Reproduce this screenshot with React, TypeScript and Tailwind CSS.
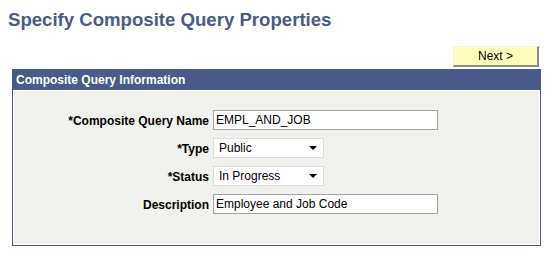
import React from "react";

function Select({ value, width }: { value: string; width: string }) {
  return (
    <div
      className={`${width} h-[20px] bg-white border border-[#dcdcdc] flex items-center justify-between pl-[5px] pr-[6px] text-[12px] text-black`}
    >
      <span>{value}</span>
      <svg width="8" height="5" viewBox="0 0 8 5">
        <polygon points="0,0 8,0 4,4" fill="#000" />
      </svg>
    </div>
  );
}

function Input({ value }: { value: string }) {
  return (
    <div className="w-[225px] h-[20px] bg-white border border-[#a5a5a5] flex items-center pl-[2px] text-[12px] text-black">
      {value}
    </div>
  );
}

function Row({ label, children }: { label: string; children: React.ReactNode }) {
  return (
    <div className="flex items-center h-[28px]">
      <div className="w-[199px] text-right font-bold text-[12px] text-black pr-[4px] pt-[2px]">
        {label}
      </div>
      {children}
    </div>
  );
}

export default function App() {
  return (
    <div
      className="w-[547px] h-[253px] bg-white relative overflow-hidden"
      style={{ fontFamily: '"Liberation Sans", Arial, sans-serif' }}
    >
      <div className="pl-[8px] pt-[7px] h-[46px]">
        <h1 className="text-[18.6px] font-bold text-[#4a5a8a] leading-[26px]">
          Specify Composite Query Properties
        </h1>
      </div>
      <div className="flex justify-end pr-[8px] h-[23px]">
        <div className="w-[86px] h-[21px] bg-[#ffffbb] border-t border-l border-[#f2f2f2] border-r-2 border-b-2 border-r-[#8a8a8a] border-b-[#8a8a8a] flex items-center justify-center text-[12px] text-black">
          Next &gt;
        </div>
      </div>
      <div className="ml-[12px] w-[529px] h-[177px] border border-[#4a5a8a] flex flex-col">
        <div className="h-[20px] bg-[#4a5a8a] flex items-center pl-[3px] text-[12px] font-bold text-white">
          Composite Query Information
        </div>
        <div className="flex-1 bg-[#f1f2ee] border border-white pt-[15px]">
          <Row label="*Composite Query Name">
            <Input value="EMPL_AND_JOB" />
          </Row>
          <Row label="*Type">
            <Select value="Public" width="w-[111px]" />
          </Row>
          <Row label="*Status">
            <Select value="In Progress" width="w-[111px]" />
          </Row>
          <Row label="Description">
            <Input value="Employee and Job Code" />
          </Row>
        </div>
      </div>
    </div>
  );
}
